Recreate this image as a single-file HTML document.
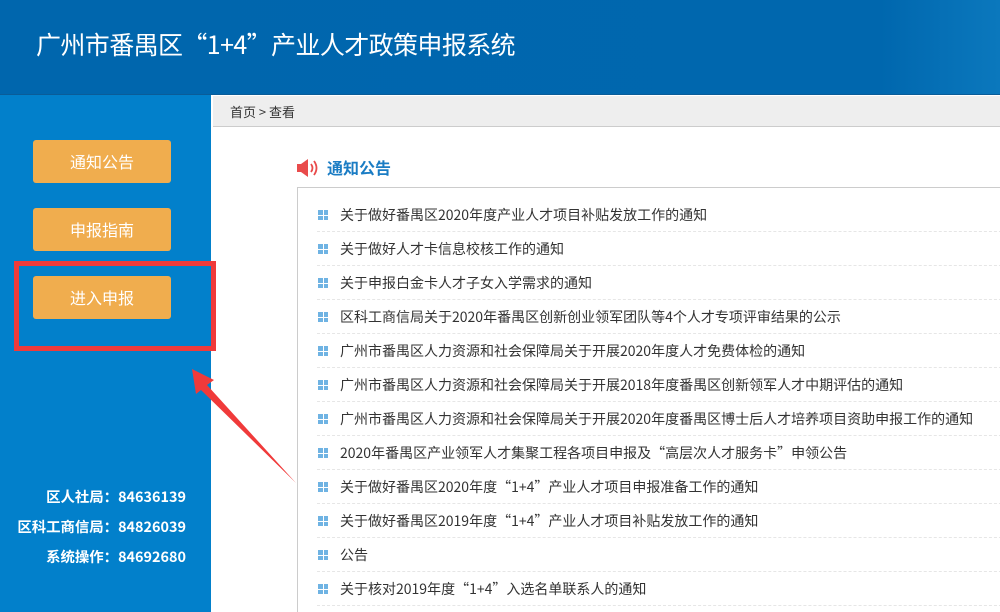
<!DOCTYPE html>
<html><head><meta charset="utf-8"><style>
*{margin:0;padding:0;box-sizing:border-box}
html,body{width:1000px;height:612px;overflow:hidden}
body{position:relative;font-family:"Noto Sans CJK SC","Liberation Sans",sans-serif;background:#fff}
.hd{position:absolute;left:0;top:0;width:1000px;height:95px;background:linear-gradient(90deg,#0066ad 0%,#0067ae 88%,#0b78bd 100%);border-bottom:1px solid #0a5c98}
.hd h1{position:absolute;left:36px;top:26px;color:#fff;font-size:25px;font-weight:normal;letter-spacing:-0.6px}
.sb{position:absolute;left:0;top:95px;width:211px;height:517px;background:#0280cb}
.btn{position:absolute;left:33px;width:138px;height:43px;background:#f0ad4e;border-radius:3px;color:#fff;font-size:16px;text-align:center;line-height:43px}
.ct{position:absolute;right:814px;color:#fff;font-size:14.4px;font-weight:bold;text-align:right;white-space:nowrap;line-height:20px}
.bc{position:absolute;left:213px;top:96px;width:787px;height:31px;background:#eee;border-bottom:1px solid #ccc;font-size:13px;color:#333;padding-left:17px;line-height:31px}
.ttl{position:absolute;left:327px;top:155px;color:#1a7cc4;font-size:16px;font-weight:bold;line-height:24px}
.box{position:absolute;left:297px;top:187px;width:720px;height:440px;border:1px solid #ccc}
.row{position:absolute;left:317px;width:700px;height:34px;border-bottom:1px dashed #e6e6e6;font-size:14px;color:#333;line-height:34px;padding-left:23px;white-space:nowrap}
.row i{position:absolute;left:1px;top:12px;width:10px;height:10px;background:
linear-gradient(#fff,#fff) 4.5px 0/1px 10px no-repeat,linear-gradient(#fff,#fff) 0 4.5px/10px 1px no-repeat,#6fb3e3}
.red{position:absolute;left:14px;top:261px;width:202px;height:90px;border:5px solid #f03a3a}
</style></head><body>
<div class="hd"><h1>广州市番禺区“1+4”产业人才政策申报系统</h1></div>
<div class="sb"></div>
<div class="btn" style="top:140px">通知公告</div>
<div class="btn" style="top:208px">申报指南</div>
<div class="btn" style="top:276px">进入申报</div>
<div class="red"></div>
<div class="ct" style="top:487px">区人社局：84636139</div>
<div class="ct" style="top:517px">区科工商信局：84826039</div>
<div class="ct" style="top:547px">系统操作：84692680</div>
<div class="bc">首页 &gt; 查看</div>
<svg style="position:absolute;left:296px;top:158px" width="26" height="20" viewBox="0 0 26 20"><path d="M1 6h4l7-5v18l-7-5H1z" fill="#e94b4b"/><path d="M15 6q3 4 0 8M18 3q5 7 0 14" stroke="#e94b4b" stroke-width="1.8" fill="none"/></svg>
<div class="ttl">通知公告</div>
<div class="box"></div>
<div class="row" style="top:198px"><i></i>关于做好番禺区2020年度产业人才项目补贴发放工作的通知</div>
<div class="row" style="top:232px"><i></i>关于做好人才卡信息校核工作的通知</div>
<div class="row" style="top:266px"><i></i>关于申报白金卡人才子女入学需求的通知</div>
<div class="row" style="top:300px"><i></i>区科工商信局关于2020年番禺区创新创业领军团队等4个人才专项评审结果的公示</div>
<div class="row" style="top:334px"><i></i>广州市番禺区人力资源和社会保障局关于开展2020年度人才免费体检的通知</div>
<div class="row" style="top:368px"><i></i>广州市番禺区人力资源和社会保障局关于开展2018年度番禺区创新领军人才中期评估的通知</div>
<div class="row" style="top:402px"><i></i>广州市番禺区人力资源和社会保障局关于开展2020年度番禺区博士后人才培养项目资助申报工作的通知</div>
<div class="row" style="top:436px"><i></i>2020年番禺区产业领军人才集聚工程各项目申报及“高层次人才服务卡”申领公告</div>
<div class="row" style="top:470px"><i></i>关于做好番禺区2020年度“1+4”产业人才项目申报准备工作的通知</div>
<div class="row" style="top:504px"><i></i>关于做好番禺区2019年度“1+4”产业人才项目补贴发放工作的通知</div>
<div class="row" style="top:538px"><i></i>公告</div>
<div class="row" style="top:572px"><i></i>关于核对2019年度“1+4”入选名单联系人的通知</div>
<svg style="position:absolute;left:0;top:0" width="1000" height="612"><polygon points="192,369 214,380 207,385 296,483 201,390 196,394" fill="#f03a3a"/></svg>
</body></html>
